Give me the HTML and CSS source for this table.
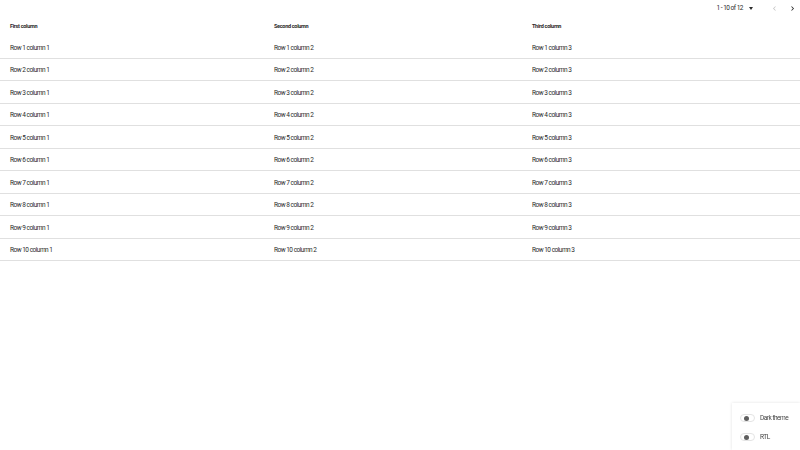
FILE: index.html
```html
<!DOCTYPE html>
<html lang="en">
<head>
  <meta charset="UTF-8">
  <meta name="viewport" content="width=device-width, initial-scale=1.0">
  <title>Data table</title>
  <link rel="stylesheet" href="styles.css">
</head>
<body>

<!-- Pagination -->
<div class="pager">
  <span class="pager-range">1 - 10 of 12</span>
  <span class="pager-caret"></span>
  <button class="pager-btn disabled" aria-label="Previous">
    <svg viewBox="0 0 24 24" width="9" height="9"><path d="M15.4 7.4 14 6l-6 6 6 6 1.4-1.4-4.6-4.6z"/></svg>
  </button>
  <button class="pager-btn next" aria-label="Next">
    <svg viewBox="0 0 24 24" width="9" height="9"><path d="M8.6 16.6 10 18l6-6-6-6-1.4 1.4 4.6 4.6z"/></svg>
  </button>
</div>

<div class="table">
  <div class="row head">
    <div class="cell">First column</div>
    <div class="cell">Second column</div>
    <div class="cell">Third column</div>
  </div>
  <div class="row"><div class="cell">Row 1 column 1</div><div class="cell">Row 1 column 2</div><div class="cell">Row 1 column 3</div></div>
  <div class="row"><div class="cell">Row 2 column 1</div><div class="cell">Row 2 column 2</div><div class="cell">Row 2 column 3</div></div>
  <div class="row"><div class="cell">Row 3 column 1</div><div class="cell">Row 3 column 2</div><div class="cell">Row 3 column 3</div></div>
  <div class="row"><div class="cell">Row 4 column 1</div><div class="cell">Row 4 column 2</div><div class="cell">Row 4 column 3</div></div>
  <div class="row"><div class="cell">Row 5 column 1</div><div class="cell">Row 5 column 2</div><div class="cell">Row 5 column 3</div></div>
  <div class="row"><div class="cell">Row 6 column 1</div><div class="cell">Row 6 column 2</div><div class="cell">Row 6 column 3</div></div>
  <div class="row"><div class="cell">Row 7 column 1</div><div class="cell">Row 7 column 2</div><div class="cell">Row 7 column 3</div></div>
  <div class="row"><div class="cell">Row 8 column 1</div><div class="cell">Row 8 column 2</div><div class="cell">Row 8 column 3</div></div>
  <div class="row"><div class="cell">Row 9 column 1</div><div class="cell">Row 9 column 2</div><div class="cell">Row 9 column 3</div></div>
  <div class="row"><div class="cell">Row 10 column 1</div><div class="cell">Row 10 column 2</div><div class="cell">Row 10 column 3</div></div>
</div>

<!-- Settings -->
<div class="settings">
  <label class="toggle"><span class="track"><span class="thumb"></span></span>Dark theme</label>
  <label class="toggle"><span class="track"><span class="thumb"></span></span>RTL</label>
</div>

</body>
</html>
```

FILE: styles.css
```css
body {
  margin: 0;
  font-family: Roboto, "Liberation Sans", sans-serif;
  font-size: 6.5px;
  letter-spacing: -0.5px;
  color: #2a2a2a;
  background: #fff;
}
.pager {
  display: flex;
  align-items: center;
  justify-content: flex-end;
  height: 16px;
}
.pager-range {
  margin-right: 6px;
}
.pager-caret {
  width: 0;
  height: 0;
  border-left: 2.5px solid transparent;
  border-right: 2.5px solid transparent;
  border-top: 3px solid #2a2a2a;
  margin-right: 12px;
}
.pager-btn {
  border: 0;
  background: none;
  padding: 0;
  width: 19px;
  height: 16px;
  display: flex;
  align-items: center;
  justify-content: center;
  fill: #1f1f1f;
}
.pager-btn.next {
  width: 16px;
}
.pager-btn.disabled {
  fill: #c4c4c4;
}
.row {
  display: grid;
  grid-template-columns: 264px 258px 1fr;
  height: 22.5px;
  align-items: center;
  border-bottom: 1px solid #e0e0e0;
  box-sizing: border-box;
}
.row.head {
  height: 20px;
  border-bottom: 0;
  font-weight: bold;
  font-size: 5.5px;
  letter-spacing: -0.3px;
}
.cell {
  padding: 2px 0 0 10px;
}
.row.head .cell {
  padding-top: 0;
}
.settings {
  position: fixed;
  right: 0;
  bottom: 0;
  width: 68px;
  height: 47px;
  background: #fff;
  box-shadow: 0 0 3px rgba(0, 0, 0, 0.12);
  padding: 11px 0 0 8px;
  box-sizing: border-box;
  display: flex;
  flex-direction: column;
  gap: 11px;
}
.toggle {
  display: flex;
  align-items: center;
  gap: 5px;
  color: #444;
}
.track {
  width: 15px;
  height: 8px;
  border: 1px solid #e4e4e4;
  border-radius: 5px;
  box-sizing: border-box;
  display: flex;
  align-items: center;
  padding-left: 3px;
}
.thumb {
  width: 5px;
  height: 5px;
  border-radius: 50%;
  background: #5f5f5f;
}
```
